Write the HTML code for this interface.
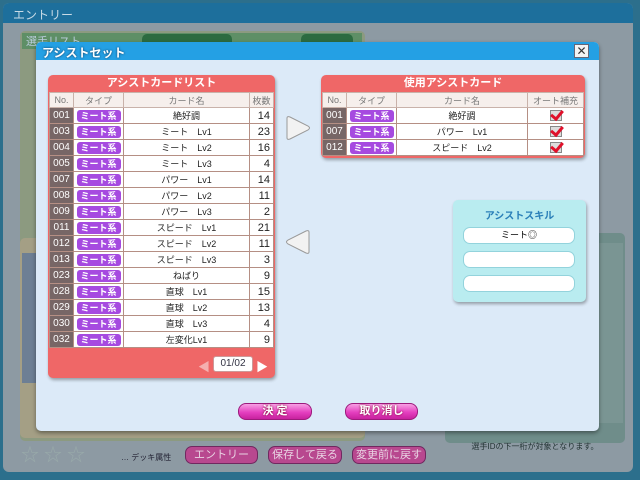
<!DOCTYPE html>
<html><head><meta charset="utf-8"><style>
*{margin:0;padding:0;box-sizing:border-box}
body{width:640px;height:480px;overflow:hidden;background:#2c6f8c;font-family:"Liberation Sans","Noto Sans CJK JP",sans-serif;position:relative}
.a{position:absolute}
.win{left:3px;top:3px;width:630px;height:469px;background:#8d9aa3;border-radius:6px;overflow:hidden}
.wt{left:0;top:0;width:630px;height:20px;background:#1d6f9c;color:#c8dbe6;font-size:12px;padding:3px 10px}
.modal{left:36px;top:42px;width:563px;height:389px;background:#dceaf8;border-radius:5px;box-shadow:0 2px 4px #0006;overflow:hidden}
.mt{left:0;top:0;width:563px;height:18px;background:#24a0e4;color:#fff;font-size:12px;padding:2px 6px;font-weight:bold;text-shadow:0 0 2px #135}
.x{left:538px;top:2px;width:15px;height:14px;background:#f4f4f4;border:1px solid #667;color:#333;font-size:12px;line-height:12px;text-align:center}
.panel{background:#ef6767;border-radius:5px;box-shadow:1px 2px 3px #0005}
.ph{color:#fff;font-size:11px;font-weight:bold;text-align:center;height:17px;line-height:17px}
table{border-collapse:collapse;font-size:9px;background:#fff}
td{height:16px;border:1px solid #b58f84;text-align:center;color:#222;padding:0}
th{height:15px;border:1px solid #c9b2aa;background:#f6efec;color:#777;font-weight:normal;font-size:9px}
td.n{background:#766;color:#fff;font-size:10px}
td.r{text-align:right;padding-right:3px;font-size:11px}
.tp{display:inline-block;width:44px;height:12px;background:#a64ae0;border-radius:3px;color:#fff;font-size:9px;line-height:12px;font-weight:bold}
.chk{display:inline-block;width:12px;height:11px;background:#ddd;border:1px solid #888;position:relative;vertical-align:middle}
.chk:after{content:"";position:absolute;left:2px;top:-3px;width:5px;height:9px;border-right:3px solid #e0102a;border-bottom:3px solid #e0102a;transform:rotate(40deg)}
.btn{height:17px;border-radius:8px;background:linear-gradient(#f7a0e4,#e540c0 55%,#c8229f);border:1px solid #9c1a7c;color:#fff;font-size:11px;font-weight:bold;text-align:center;line-height:15px;text-shadow:0 0 2px #702}
.btn2{height:18px;border-radius:7px;background:#b8488f;border:1px solid #702860;color:#e9d3e3;font-size:11px;text-align:center;line-height:16px}
.slot{left:10px;width:112px;height:17px;background:#fff;border-radius:7px;border:1px solid #93d3dc;font-size:9px;text-align:center;line-height:15px}
</style></head><body>
<div class="a win">
<div class="a wt">エントリー</div>
<div class="a" style="left:17px;top:28px;width:345px;height:410px;background:#8c9a80;border-radius:5px"></div>
<div class="a" style="left:19px;top:30px;width:340px;height:16px;background:#5e8f66;color:#bcd;font-size:11px;padding-left:4px">選手リスト</div>
<div class="a" style="left:139px;top:31px;width:90px;height:13px;background:#2c6b40;border-radius:5px"></div>
<div class="a" style="left:298px;top:31px;width:52px;height:13px;background:#2c6b40;border-radius:5px"></div>
<div class="a" style="left:17px;top:235px;width:345px;height:200px;background:#a49f85;border-radius:5px"></div>
<div class="a" style="left:19px;top:250px;width:16px;height:130px;background:#6d7f94"></div>
<div class="a" style="left:442px;top:230px;width:180px;height:210px;background:#6f8d8a;border-radius:5px"></div>
<div class="a" style="left:480px;top:240px;width:140px;height:180px;background:#7a9593"></div>
<div class="a" style="left:447px;top:438px;width:170px;height:12px;color:#233;font-size:8px;text-align:center">選手IDの下一桁が対象となります。</div>
<div class="a" style="left:18px;top:438px;color:#9aa;font-size:18px">☆ ☆ ☆</div>
<div class="a" style="left:118px;top:449px;color:#223;font-size:8px">… デッキ属性</div>
<div class="a btn2" style="left:182px;top:443px;width:73px">エントリー</div>
<div class="a btn2" style="left:265px;top:443px;width:74px">保存して戻る</div>
<div class="a btn2" style="left:349px;top:443px;width:74px">変更前に戻す</div>
</div>

<div class="a modal">
<div class="a mt">アシストセット</div>
<div class="a x">✕</div>

<div class="a panel" style="left:12px;top:33px;width:227px;height:303px">
<div class="ph">アシストカードリスト</div>
<table class="a" style="left:1px;top:17px;width:225px">
<tr><th style="width:24px">No.</th><th style="width:50px">タイプ</th><th>カード名</th><th style="width:24px">枚数</th></tr>
<tr><td class="n">001</td><td><span class="tp">ミート系</span></td><td>絶好調</td><td class="r">14</td></tr>
<tr><td class="n">003</td><td><span class="tp">ミート系</span></td><td>ミート　Lv1</td><td class="r">23</td></tr>
<tr><td class="n">004</td><td><span class="tp">ミート系</span></td><td>ミート　Lv2</td><td class="r">16</td></tr>
<tr><td class="n">005</td><td><span class="tp">ミート系</span></td><td>ミート　Lv3</td><td class="r">4</td></tr>
<tr><td class="n">007</td><td><span class="tp">ミート系</span></td><td>パワー　Lv1</td><td class="r">14</td></tr>
<tr><td class="n">008</td><td><span class="tp">ミート系</span></td><td>パワー　Lv2</td><td class="r">11</td></tr>
<tr><td class="n">009</td><td><span class="tp">ミート系</span></td><td>パワー　Lv3</td><td class="r">2</td></tr>
<tr><td class="n">011</td><td><span class="tp">ミート系</span></td><td>スピード　Lv1</td><td class="r">21</td></tr>
<tr><td class="n">012</td><td><span class="tp">ミート系</span></td><td>スピード　Lv2</td><td class="r">11</td></tr>
<tr><td class="n">013</td><td><span class="tp">ミート系</span></td><td>スピード　Lv3</td><td class="r">3</td></tr>
<tr><td class="n">023</td><td><span class="tp">ミート系</span></td><td>ねばり</td><td class="r">9</td></tr>
<tr><td class="n">028</td><td><span class="tp">ミート系</span></td><td>直球　Lv1</td><td class="r">15</td></tr>
<tr><td class="n">029</td><td><span class="tp">ミート系</span></td><td>直球　Lv2</td><td class="r">13</td></tr>
<tr><td class="n">030</td><td><span class="tp">ミート系</span></td><td>直球　Lv3</td><td class="r">4</td></tr>
<tr><td class="n">032</td><td><span class="tp">ミート系</span></td><td>左変化Lv1</td><td class="r">9</td></tr>
</table>
<div class="a" style="left:150px;top:283px;color:#f4b0b0;font-size:12px">◀</div>
<div class="a" style="left:165px;top:281px;width:40px;height:16px;background:#fff;border:1px solid #c99;border-radius:3px;font-size:10px;text-align:center;line-height:14px;color:#334">01/02</div>
<div class="a" style="left:208px;top:283px;color:#fff;font-size:12px">▶</div>
</div>

<div class="a panel" style="left:285px;top:33px;width:264px;height:83px">
<div class="ph">使用アシストカード</div>
<table class="a" style="left:1px;top:17px;width:262px">
<tr><th style="width:24px">No.</th><th style="width:50px">タイプ</th><th>カード名</th><th style="width:56px">オート補充</th></tr>
<tr><td class="n">001</td><td><span class="tp">ミート系</span></td><td>絶好調</td><td><span class="chk"></span></td></tr>
<tr><td class="n">007</td><td><span class="tp">ミート系</span></td><td>パワー　Lv1</td><td><span class="chk"></span></td></tr>
<tr><td class="n">012</td><td><span class="tp">ミート系</span></td><td>スピード　Lv2</td><td><span class="chk"></span></td></tr>
</table>
</div>

<svg class="a" style="left:248px;top:72px" width="28" height="28"><path d="M3 4 Q3 2 6 3 L24 12 Q27 14 24 16 L6 25 Q3 26 3 24Z" fill="#f2f2f2" stroke="#999"/></svg>
<svg class="a" style="left:248px;top:186px" width="28" height="28"><path d="M25 4 Q25 2 22 3 L4 12 Q1 14 4 16 L22 25 Q25 26 25 24Z" fill="#f2f2f2" stroke="#999"/></svg>

<div class="a" style="left:417px;top:158px;width:133px;height:102px;background:#b9ecf0;border-radius:5px;box-shadow:1px 2px 3px #0005">
<div class="a" style="left:0;top:7px;width:133px;text-align:center;color:#2a7fb8;font-size:10px;font-weight:bold">アシストスキル</div>
<div class="a slot" style="top:27px">ミート◎</div>
<div class="a slot" style="top:51px"></div>
<div class="a slot" style="top:75px"></div>
</div>

<div class="a btn" style="left:202px;top:361px;width:74px">決 定</div>
<div class="a btn" style="left:309px;top:361px;width:73px">取り消し</div>
</div>
</body></html>
